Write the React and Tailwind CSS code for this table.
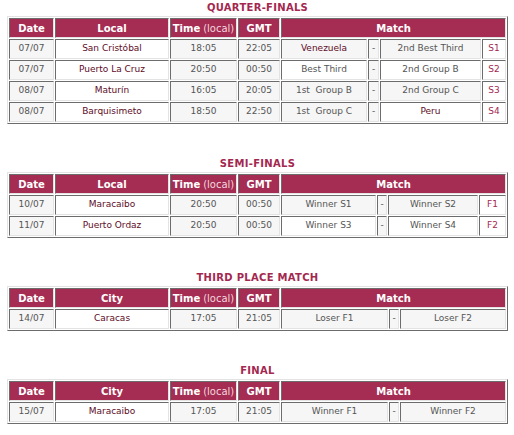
import React from "react";

const font = { fontFamily: '"DejaVu Sans", Verdana, sans-serif' };

const GRAY = "bg-[#f6f6f6]";

const Cell = ({ children, className = "" }) => (
  <div
    className={
      "flex items-center justify-center whitespace-pre border border-t-[#6c6c6c] border-l-[#6c6c6c] border-r-[#e3e3e3] border-b-[#e3e3e3] " +
      className
    }
  >
    {children}
  </div>
);

const Head = ({ children, className = "" }) => (
  <Cell className={"bg-[#a52c52] text-white text-[10px] font-bold " + className}>{children}</Cell>
);

const Section = ({ title, place, cols, span, rows, first }) => (
  <div className={first ? "" : "mt-8"}>
    <div className="h-4 text-center text-[10px] leading-4 font-bold tracking-[0.3px] text-[#a3284f]">
      {title}
    </div>
    <div
      className={
        "grid auto-rows-[20px] gap-px p-px border bg-white border-t-[#e3e3e3] border-l-[#e3e3e3] border-r-[#6c6c6c] border-b-[#6c6c6c] " +
        cols
      }
    >
      <Head>Date</Head>
      <Head>{place}</Head>
      <Head>
        Time<span className="ml-[3px] font-normal text-[#f3d6df]">(local)</span>
      </Head>
      <Head>GMT</Head>
      <Head className={span}>Match</Head>
      {rows.map((r, i) => (
        <React.Fragment key={i}>
          <Cell className={GRAY + " text-[#555]"}>{r.date}</Cell>
          <Cell className="bg-white text-[#5e0b27]">{r.city}</Cell>
          <Cell className={GRAY + " text-[#555]"}>{r.time}</Cell>
          <Cell className={GRAY + " text-[#555]"}>{r.gmt}</Cell>
          <Cell className={(r.g1 ? GRAY : "bg-white") + (r.m1 ? " text-[#5e0b27]" : " text-[#555]")}>
            {r.t1}
          </Cell>
          <Cell className={GRAY + " text-[#555]"}>-</Cell>
          <Cell className={(r.g2 ? GRAY : "bg-white") + (r.m2 ? " text-[#5e0b27]" : " text-[#555]")}>
            {r.t2}
          </Cell>
          {r.code && <Cell className="bg-white text-[#a3264f]">{r.code}</Cell>}
        </React.Fragment>
      ))}
    </div>
  </div>
);

const quarter = [
  { date: "07/07", city: "San Cristóbal", time: "18:05", gmt: "22:05", t1: "Venezuela", m1: true, g1: true, t2: "2nd Best Third", g2: true, code: "S1" },
  { date: "07/07", city: "Puerto La Cruz", time: "20:50", gmt: "00:50", t1: "Best Third", t2: "2nd Group B", code: "S2" },
  { date: "08/07", city: "Maturín", time: "16:05", gmt: "20:05", t1: "1st  Group B", g1: true, t2: "2nd Group C", g2: true, code: "S3" },
  { date: "08/07", city: "Barquisimeto", time: "18:50", gmt: "22:50", t1: "1st  Group C", g1: true, t2: "Peru", m2: true, code: "S4" },
];

const semi = [
  { date: "10/07", city: "Maracaibo", time: "20:50", gmt: "00:50", t1: "Winner S1", g1: true, t2: "Winner S2", g2: true, code: "F1" },
  { date: "11/07", city: "Puerto Ordaz", time: "20:50", gmt: "00:50", t1: "Winner S3", t2: "Winner S4", code: "F2" },
];

const third = [
  { date: "14/07", city: "Caracas", time: "17:05", gmt: "21:05", t1: "Loser F1", g1: true, t2: "Loser F2", g2: true },
];

const final = [
  { date: "15/07", city: "Maracaibo", time: "17:05", gmt: "21:05", t1: "Winner F1", g1: true, t2: "Winner F2", g2: true },
];

export default function App() {
  return (
    <div className="w-[514px] h-[435px] bg-white pl-[7px] text-[9px] overflow-hidden" style={font}>
      <div className="w-[501px]">
        <Section
          first
          title="QUARTER-FINALS"
          place="Local"
          cols="grid-cols-[45px_114px_67px_42px_86px_11px_101px_24px]"
          span="col-span-4"
          rows={quarter}
        />
        <Section
          title="SEMI-FINALS"
          place="Local"
          cols="grid-cols-[45px_114px_67px_42px_95px_10px_90px_27px]"
          span="col-span-4"
          rows={semi}
        />
        <Section
          title="THIRD PLACE MATCH"
          place="City"
          cols="grid-cols-[45px_114px_67px_42px_107px_10px_106px]"
          span="col-span-3"
          rows={third}
        />
        <Section
          title="FINAL"
          place="City"
          cols="grid-cols-[45px_114px_67px_42px_107px_10px_106px]"
          span="col-span-3"
          rows={final}
        />
      </div>
    </div>
  );
}
